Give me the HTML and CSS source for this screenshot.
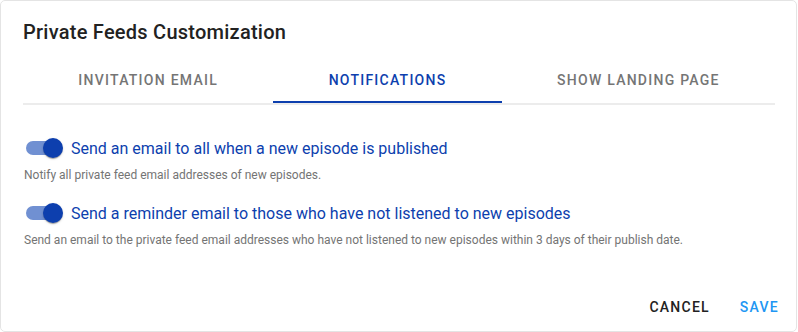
FILE: index.html
```html
<!DOCTYPE html>
<html>
<head>
<meta charset="utf-8">
<link rel="stylesheet" href="styles.css">
</head>
<body>
<div class="dialog">
  <h2 class="title">Private Feeds Customization</h2>
  <div class="tabs">
    <div class="tab">Invitation Email</div>
    <div class="tab active">Notifications</div>
    <div class="tab">Show Landing Page</div>
  </div>
  <div class="content">
    <div class="option">
      <div class="row">
        <span class="switch"><span class="track"></span><span class="thumb"></span></span>
        <span class="label">Send an email to all when a new episode is published</span>
      </div>
      <p class="desc">Notify all private feed email addresses of new episodes.</p>
    </div>
    <div class="option">
      <div class="row">
        <span class="switch"><span class="track"></span><span class="thumb"></span></span>
        <span class="label">Send a reminder email to those who have not listened to new episodes</span>
      </div>
      <p class="desc">Send an email to the private feed email addresses who have not listened to new episodes within 3 days of their publish date.</p>
    </div>
  </div>
  <div class="actions">
    <button class="btn cancel">Cancel</button>
    <button class="btn save">Save</button>
  </div>
</div>
</body>
</html>
```
FILE: styles.css
```css
* { box-sizing: border-box; }
html, body { margin: 0; padding: 0; background: #fff; }
body { font-family: Roboto, "Noto Sans", sans-serif; }
.dialog {
  width: 797px;
  height: 332px;
  border: 1px solid #e4e4e4;
  border-radius: 5px;
  display: flex;
  flex-direction: column;
  padding: 0 22px;
}
.title {
  margin: 0;
  padding-top: 15px;
  font-size: 20px;
  font-weight: 500;
  line-height: 32px;
  color: #222;
  letter-spacing: 0.25px;
}
.tabs {
  display: flex;
  margin-top: 7px;
  width: 752px;
  border-bottom: 2px solid #ececec;
}
.tab {
  flex: 1 1 auto;
  height: 48px;
  padding-top: 2px;
  display: flex;
  align-items: center;
  justify-content: center;
  text-transform: uppercase;
  font-size: 14px;
  font-weight: 500;
  letter-spacing: 1.25px;
  color: #757575;
  position: relative;
}
.tab.active { color: #0d3fae; }
.tab.active::after {
  content: "";
  position: absolute;
  left: 0; right: 0; bottom: 0;
  height: 2px;
  background: #0d3fae;
}
.content { padding-top: 31px; }
.option { margin-bottom: 18px; }
.row { display: flex; align-items: center; height: 24px; }
.switch {
  position: relative;
  width: 38px;
  height: 20px;
  margin-left: 2px;
  margin-right: 8px;
}
.track {
  position: absolute;
  left: 1px; top: 3px;
  width: 34px; height: 14px;
  border-radius: 7px;
  background: #7090d2;
}
.thumb {
  position: absolute;
  left: 18px; top: 0;
  width: 20px; height: 20px;
  border-radius: 50%;
  background: #0d3fae;
  box-shadow: 0 2px 1px -1px rgba(0,0,0,.2), 0 1px 1px 0 rgba(0,0,0,.14), 0 1px 3px 0 rgba(0,0,0,.12);
}
.label {
  font-size: 16px;
  color: #0d3fae;
}
.desc {
  margin: 7px 0 0 1px;
  font-size: 12px;
  color: #747474;
  line-height: 16px;
}
.actions {
  margin-top: auto;
  display: flex;
  justify-content: flex-end;
  gap: 14px;
  padding-bottom: 6px;
  margin-right: -13px;
}
.btn {
  background: none;
  border: 0;
  font-family: inherit;
  font-size: 14px;
  font-weight: 500;
  letter-spacing: 1.25px;
  text-transform: uppercase;
  padding: 6px 8px;
  line-height: 24px;
}
.cancel { color: #222; }
.save { color: #2196f3; }
```
